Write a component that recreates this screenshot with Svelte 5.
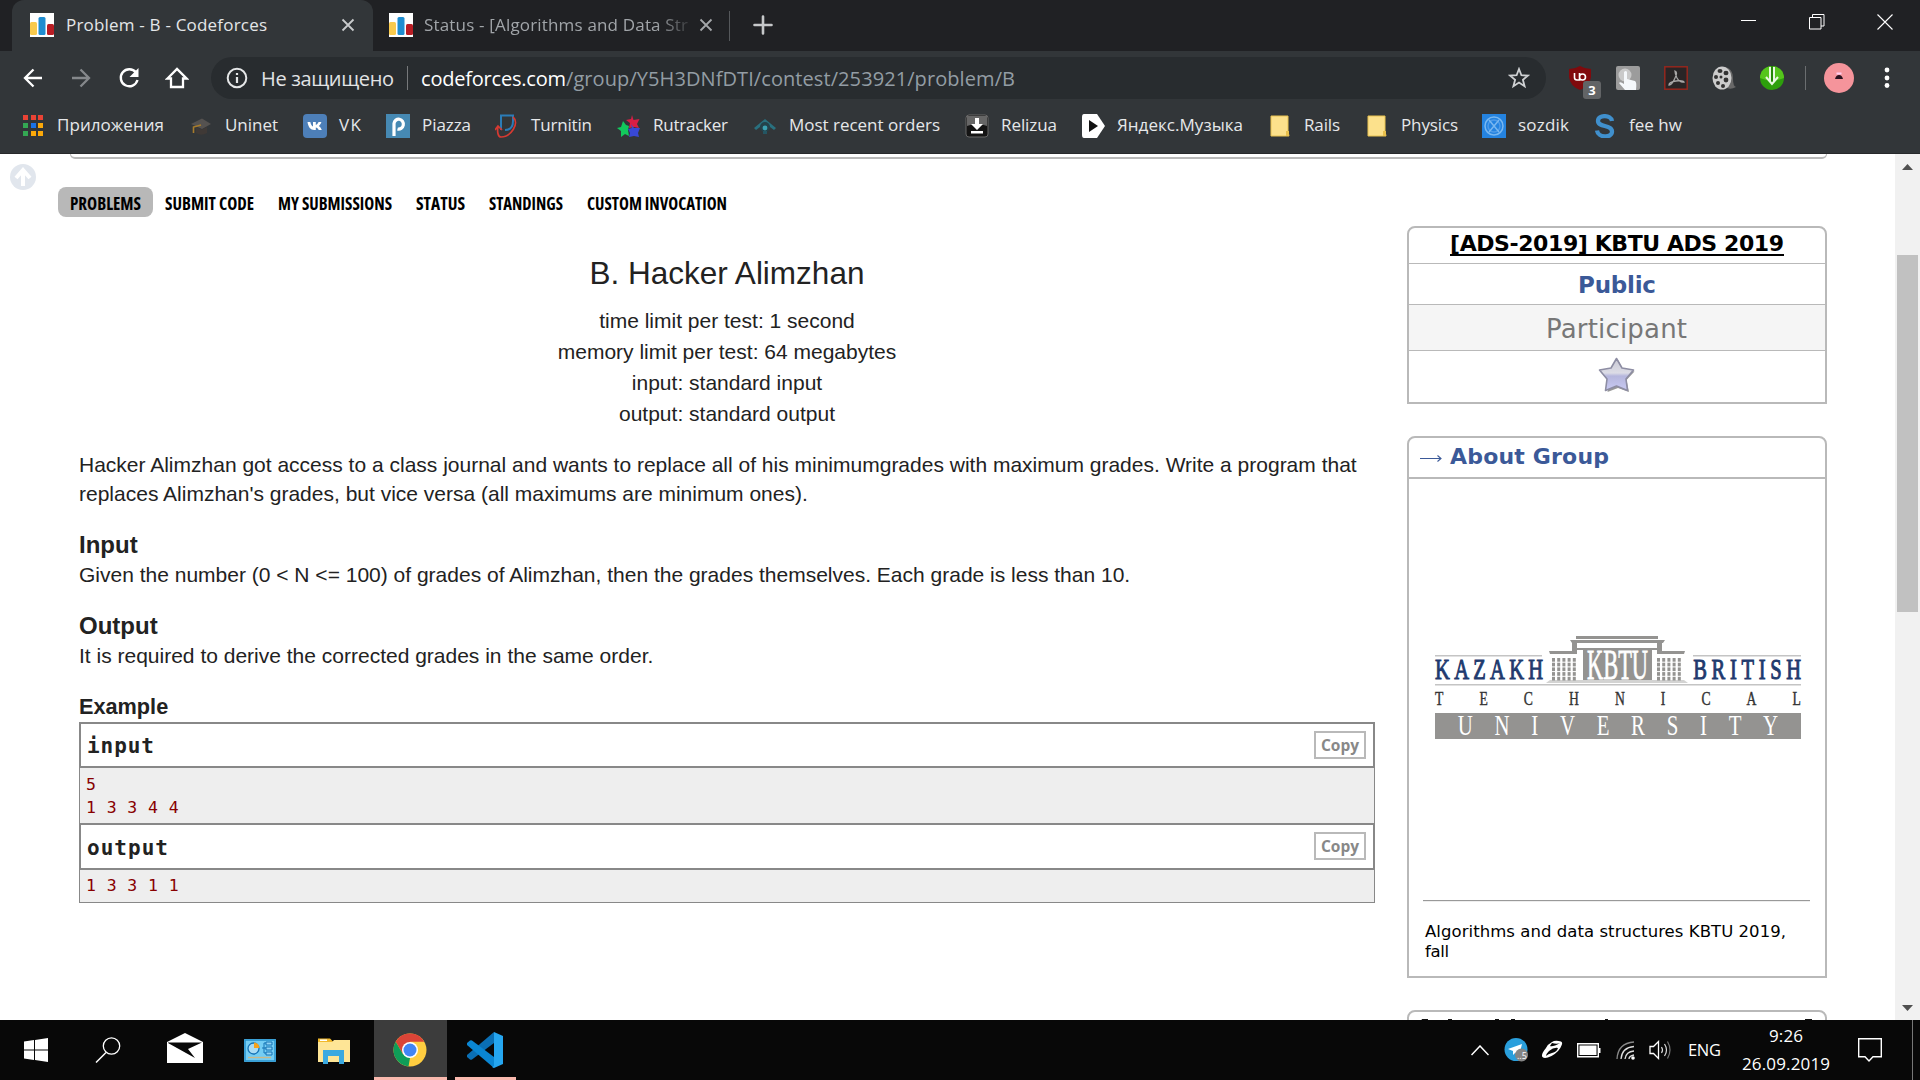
<script>
  const bookmarks = [
    { icon: 'apps', label: 'Приложения', slot: 168, text: 107 },
    { icon: 'uninet', label: 'Uninet', slot: 114, text: 53 },
    { icon: 'vk', label: 'VK', slot: 83, text: 22 },
    { icon: 'piazza', label: 'Piazza', slot: 109, text: 49 },
    { icon: 'turnitin', label: 'Turnitin', slot: 122, text: 61 },
    { icon: 'rutracker', label: 'Rutracker', slot: 136, text: 75 },
    { icon: 'orders', label: 'Most recent orders', slot: 212, text: 151 },
    { icon: 'relizua', label: 'Relizua', slot: 116, text: 56 },
    { icon: 'music', label: 'Яндекс.Музыка', slot: 187, text: 126 },
    { icon: 'folder', label: 'Rails', slot: 97, text: 36 },
    { icon: 'folder', label: 'Physics', slot: 117, text: 57 },
    { icon: 'sozdik', label: 'sozdik', slot: 111, text: 51 },
    { icon: 'fee', label: 'fee hw', slot: 100, text: 53 },
  ];
  const menu = [
    ['PROBLEMS', 71],
    ['SUBMIT CODE', 89],
    ['MY SUBMISSIONS', 114],
    ['STATUS', 49],
    ['STANDINGS', 74],
    ['CUSTOM INVOCATION', 140],
  ];
  const limits = [
    'time limit per test: 1 second',
    'memory limit per test: 64 megabytes',
    'input: standard input',
    'output: standard output',
  ];
  const columns = [0, 1, 2, 3, 4];
  const floors = [0, 1, 2, 3, 4];
</script>

{#snippet fit(text, width, size, squeeze = 'spacing')}
  <svg class="fit" {width} height={Math.round(size * 1.4)}>
    <text x="0" y={Math.round(size * 1.05)} font-size={size} textLength={width} lengthAdjust={squeeze}>{text}</text>
  </svg>
{/snippet}

{#snippet favicon()}
  <svg width="24" height="24" viewBox="0 0 24 24">
    <rect width="24" height="24" fill="#fff" />
    <rect x="0" y="9" width="7" height="13" rx="1.5" fill="#f9ca4d" />
    <rect x="8.500" y="4" width="7" height="18" rx="1.500" fill="#1f8dd0" />
    <rect x="17" y="11" width="7" height="11" rx="1.500" fill="#b81d24" />
  </svg>
{/snippet}

{#snippet bookmarkIcon(name)}
  <svg width="24" height="24" viewBox="0 0 24 24">
    {#if name === 'apps'}
      <g>
        <path fill="#ea4335" d="M2 1h5v5H2zM10 1h5v5h-5zM17 1h5v5h-5z" />
        <path fill="#34a853" d="M2 9h5v5H2zM2 17h5v5H2z" />
        <path fill="#1a73e8" d="M10 9h5v5h-5z" />
        <path fill="#fba90a" d="M17 9h5v5h-5zM10 17h5v5h-5zM17 17h5v5h-5z" />
      </g>
    {:else if name === 'uninet'}
      <path d="M2 10 13 4.500l9 5.500-9 5z" fill="#555250" /><path d="M7 13v6q5 3.500 11 0v-6l-5 2.500z" fill="#3f3936" />
      <path d="M12 11 4.500 13v6" fill="none" stroke="#a87c2b" stroke-width="1.600" />
    {:else if name === 'vk'}
      <rect width="24" height="24" rx="4" fill="#4d7fb8" />
      <path d="M4.500 8h2.800c.6 2.500 1.500 4 2.700 4.500V8h2.800v3c1.200-.3 2-1.500 2.800-3h2.800c-.5 1.700-1.500 3-2.600 4 1.300.8 2.300 2 3 4h-3c-.7-1.400-1.700-2.400-3-2.600V16h-1.500C7.500 16 5.200 13 4.500 8z" fill="#fff" />
    {:else if name === 'piazza'}
      <rect width="24" height="24" fill="#4689b3" />
      <path d="M8 22V9.500a4.700 5 0 1 1 3.500 5.500" fill="none" stroke="#fff" stroke-width="3.200" />
    {:else if name === 'turnitin'}
      <path d="M6 16V1.500h12V7c0 6-3 9-8 9" fill="none" stroke="#2b7cb8" stroke-width="2" />
      <path d="M18 3c7 6-2 20-12 20-3 0-4-5-3-11M0 16l3-4 4 4" fill="none" stroke="#d63a32" stroke-width="1.700" />
    {:else if name === 'rutracker'}
      <path d="m15 1 1.500 5 6-1-2.500 5 2 4-5-1-5 1 1-5-4-3 5-1z" fill="#d91e45" />
      <path d="m6 7 3 4 3 1-1 4 1 6-4-2-4 3 0-6-4-3 4-1z" fill="#12c95c" />
      <path d="m14 10 3 4 6 0-2 5 1 4-5-1-5 1 1-4-2-4 4-1z" fill="#3848d5" />
    {:else if name === 'orders'}
      <path d="M1 14 12 5l11 9-2 2-4-3a6 6 0 0 0-10 0l-4 3z" fill="#29707f" /><circle cx="12" cy="13" r="5" fill="#24424b" /><circle cx="12" cy="14" r="2.400" fill="#3ba1b3" /><path d="M10 17h4v3h-4z" fill="#245663" />
    {:else if name === 'relizua'}
      <rect x="1" y="1" width="22" height="22" rx="3" fill="#141414" stroke="#666" />
      <path d="M2 2h20v10q-10-4-20 0z" fill="#666" />
      <path d="M10 4h4v6h4l-6 6-6-6h4zM6 17h12v2.500H6z" fill="#fff" />
    {:else if name === 'music'}
      <path d="M3 0h13l8 12-8 12H3q-2 0-2-3V3q0-3 2-3z" fill="#fff" /><path d="m8 6 9 6-9 6z" fill="#111" />
    {:else if name === 'folder'}
      <path d="M3 2h17v15l1 5H3z" fill="#fce18c" stroke="#e8c250" /><path d="M18 22v-5h3v5z" fill="#e9c04c" />
    {:else if name === 'sozdik'}
      <rect width="24" height="24" fill="#2483e0" /><g fill="none" stroke="#78b7f0" stroke-width="1.500"><circle cx="12" cy="12" r="9" /><circle cx="12" cy="12" r="6" stroke="#4f9be8" /><path d="m7 6 10 12M17 6 7 18" /></g>
    {:else}
      <path d="M19 7C18 .5 5 .5 5 7s14 3.500 14 10.500-14 6.500-15-1" fill="none" stroke="#4090cd" stroke-width="4.300" />
    {/if}
  </svg>
{/snippet}

<div class="screen">
  <div class="tabs">
    <div class="tab active">
      {@render favicon()}
      <div class="tab-title">{@render fit('Problem - B - Codeforces', 201, 17)}</div>
      <svg width="14" height="14" viewBox="0 0 14 14"><path d="m1.500 1.500 11 11m0-11-11 11" stroke="#c8cacc" stroke-width="1.800" /></svg>
    </div>
    <div class="tab idle">
      {@render favicon()}
      <div class="tab-title fade">{@render fit('Status - [Algorithms and Data Str', 264, 17)}</div>
      <svg width="14" height="14" viewBox="0 0 14 14"><path d="m1.500 1.500 11 11m0-11-11 11" stroke="#a4a7aa" stroke-width="1.800" /></svg>
    </div>
    <span class="tab-sep"></span>
    <svg class="plus" width="20" height="20" viewBox="0 0 20 20"><path d="M10 1.500v17M1.500 10h17" stroke="#c6c8ca" stroke-width="2.600" stroke-linecap="round" /></svg>
    <div class="window-controls">
      <svg width="16" height="16" viewBox="0 0 16 16"><path d="M0 6.500h15" stroke="#fff" /></svg>
      <svg width="16" height="16" viewBox="0 0 16 16"><path d="M.5 3.500h11.500v11.500H.5zM3.500 3.500V.5H15V12h-3" fill="none" stroke="#fff" /></svg>
      <svg width="16" height="16" viewBox="0 0 16 16"><path d="m.5.5 15 15m0-15-15 15" stroke="#fff" stroke-width="1.100" /></svg>
    </div>
  </div>

  <div class="toolbar">
    <div class="nav">
      <svg width="24" height="24" viewBox="0 0 24 24"><path d="M21 12H4m8.500-8.500L4 12l8.500 8.500" fill="none" stroke="#fff" stroke-width="2.300" /></svg>
      <svg width="24" height="24" viewBox="0 0 24 24"><path d="M3 12h17M11.500 3.500 20 12l-8.500 8.500" fill="none" stroke="#85888b" stroke-width="2.300" /></svg>
      <svg width="24" height="24" viewBox="0 0 24 24"><path d="M19 6.500A8.500 8.500 0 1 0 20.500 14" fill="none" stroke="#fff" stroke-width="2.400" /><path d="M21.500 2v9h-9z" fill="#fff" /></svg>
      <svg width="24" height="24" viewBox="0 0 24 24"><path d="M2.500 12.500 12 3l9.500 9.500H18V21H6v-8.500z" fill="none" stroke="#fff" stroke-width="2.300" /></svg>
    </div>
    <div class="omnibox">
      <svg width="22" height="22" viewBox="0 0 22 22"><circle cx="11" cy="11" r="9.300" fill="none" stroke="#e5e7e8" stroke-width="2" /><path d="M11 10v6M11 6v2" stroke="#e5e7e8" stroke-width="2.200" /></svg>
      <span class="secure">{@render fit('Не защищено', 133, 20)}</span>
      <span class="omni-sep"></span>
      <span class="host">{@render fit('codeforces.com', 145, 20)}</span><span class="path">{@render fit('/group/Y5H3DNfDTI/contest/253921/problem/B', 449, 20)}</span>
      <svg class="star" width="22" height="22" viewBox="0 0 22 22"><path d="m11 2 2.400 6.200 6.600.4-5.100 4.200 1.700 6.400L11 15.600l-5.600 3.600 1.700-6.400L2 8.600l6.600-.4z" fill="none" stroke="#cfd1d3" stroke-width="1.800" /></svg>
    </div>
    <div class="extensions">
      <div class="ublock">
        <svg width="24" height="24" viewBox="0 0 24 24"><path d="M12 0q5 3 11 3v8q-1 9-11 13Q2 20 1 11V3q6 0 11-3z" fill="#800a0d" /><path d="M6.500 7v4.500q0 2.500 2.500 2.500h2.500V7M11.500 11a3 3 0 1 0 6 0 3 3 0 0 0-6 0" fill="none" stroke="#fff" stroke-width="1.600" /></svg>
        <span class="badge">3</span>
      </div>
      <svg width="24" height="24" viewBox="0 0 24 24"><rect width="24" height="24" rx="2" fill="#9c9c9c" /><circle cx="9" cy="9" r="6.500" fill="#cacaca" /><path d="M8 6q2-2 3 0v7l8 2q2 1 1 9H9l-6-7q1-2 5 1z" fill="#f5f8fb" /></svg>
      <svg width="24" height="24" viewBox="0 0 24 24"><rect x=".8" y=".8" width="22.400" height="22.400" fill="#292526" stroke="#94271e" stroke-width="1.500" /><path d="M11 5q3 1 0 7-3 7-6 7 0-3 7-4 7-1 8 1-4 1-7-4-2-4-2-7z" fill="none" stroke="#a8a6a6" stroke-width="1.300" /></svg>
      <svg width="24" height="24" viewBox="0 0 24 24"><path d="M11 1q10 0 10 12 0 7 3 8-5 3-9 1z" fill="#686868" /><ellipse cx="10" cy="12" rx="9.500" ry="11.500" fill="#ccc" /><g fill="#333"><ellipse cx="8" cy="5" rx="2.500" ry="2" /><ellipse cx="14" cy="7" rx="2.500" ry="2.200" /><circle cx="4" cy="11" r="2" /><circle cx="14" cy="14" r="2.400" /><circle cx="6" cy="17" r="2" /><circle cx="11" cy="20" r="2" /><circle cx="9" cy="11" r="1.500" /></g></svg>
      <svg width="24" height="24" viewBox="0 0 24 24"><circle cx="12" cy="12" r="12" fill="#2d9f0c" /><path d="M0 12a12 12 0 0 1 24 0q-12 5-24 0z" fill="#55c51c" /><path d="M10 1v14M14 1v14M6 11l6 7 6-7" fill="none" stroke="#e9f8e2" stroke-width="2" /><path d="M12 0v15" stroke="#258707" stroke-width="2" /></svg>
      <span class="ext-sep"></span>
      <svg class="avatar" width="30" height="30" viewBox="0 0 30 30"><circle cx="15" cy="15" r="15" fill="#f5949b" /><path d="M11 16q1-4 4-4t4 4z" fill="#2a1320" /><path d="M12.500 9.500h5v2h-5z" fill="#fce" /></svg>
      <svg width="6" height="24" viewBox="0 0 6 24"><g fill="#fff"><circle cx="3" cy="4" r="2.400" /><circle cx="3" cy="12" r="2.400" /><circle cx="3" cy="19.500" r="2.400" /></g></svg>
    </div>
  </div>

  <div class="bookmarks">
    {#each bookmarks as b}
      <div class="bookmark" style:width="{b.slot}px">
        {@render bookmarkIcon(b.icon)}
        <span class="bookmark-label">{@render fit(b.label, b.text, 17)}</span>
      </div>
    {/each}
  </div>

  <div class="page">
    <div class="gutter">
      <svg width="26" height="26" viewBox="0 0 26 26"><circle cx="13" cy="13" r="13" fill="#e1e6ed" /><path d="M13 22V7M6 14l7-8 7 8" fill="none" stroke="#fff" stroke-width="4" /></svg>
    </div>
    <div class="site">
      <div class="box-end"></div>
      <div class="columns">
        <main>
          <nav class="menu">
            {#each menu as [label, width], i}
              <span class="menu-item" class:current={i === 0}>{@render fit(label, width, 18, 'spacingAndGlyphs')}</span>
            {/each}
          </nav>
          <article>
            <h1>B. Hacker Alimzhan</h1>
            {#each limits as line}<div class="limit">{line}</div>{/each}
            <p class="statement">Hacker Alimzhan got access to a class journal and wants to replace all of his minimumgrades with maximum grades. Write a program that replaces Alimzhan's grades, but vice versa (all maximums are minimum ones).</p>
            <h2>Input</h2>
            <p>Given the number (0 &lt; N &lt;= 100) of grades of Alimzhan, then the grades themselves. Each grade is less than 10.</p>
            <h2 class="output-title">Output</h2>
            <p>It is required to derive the corrected grades in the same order.</p>
            <h3>Example</h3>
            <div class="sample">
              <div class="sample-head"><span class="sample-title">{@render fit('input', 67, 21)}</span><span class="copy">Copy</span></div>
              <pre class="two">5
1 3 3 4 4</pre>
              <div class="sample-head second"><span class="sample-title">{@render fit('output', 81, 21)}</span><span class="copy">Copy</span></div>
              <pre class="one">1 3 3 1 1</pre>
            </div>
          </article>
        </main>
        <aside>
          <section class="card">
            <div class="row group"><span class="group-link">{@render fit('[ADS-2019] KBTU ADS 2019', 334, 22)}</span></div>
            <div class="row public">{@render fit('Public', 78, 23)}</div>
            <div class="row participant">{@render fit('Participant', 141, 26)}</div>
            <div class="row rate">
              <svg width="38" height="38" viewBox="0 0 38 38">
                <defs><linearGradient id="silver" x1="0" y1="0" x2="0" y2="1"><stop offset="0" stop-color="#c9c9d4" /><stop offset=".45" stop-color="#dcdce6" /><stop offset=".55" stop-color="#b5b6dd" /><stop offset="1" stop-color="#c9caf2" /></linearGradient></defs>
                <path d="m20 4 5 9.500 11.500 2-8 8.500 2.500 12-11-4-10.500 4 2.500-12-8-8.500 11-2z" fill="#444" opacity=".55" />
                <path d="m18.500 2.500 5.500 9.500 11.500 2-7.500 9 1.500 11.500-11-4.500-11 4.500L9 23 1.500 14 13 12z" fill="url(#silver)" stroke="#8d8da3" stroke-width="1.600" stroke-linejoin="round" />
              </svg>
            </div>
          </section>
          <section class="card about">
            <div class="caption">
              <svg width="22" height="12" viewBox="0 0 22 12"><path d="M0 7.500h21M17.500 4.500l3.500 3-3.500 3" fill="none" stroke="#3b5998" stroke-width="1.100" /></svg>
              {@render fit('About Group', 159, 22)}
            </div>
            <div class="about-body">
              <svg class="logo" width="368" height="106" viewBox="0 0 368 106">
                <g fill="#949391">
                  <path d="M142 0h82v3h-82zM136 4h95l-2 3h-91zM138 7h5v11h-5zM223 7h5v11h-5zM115 15h23v3h-22zM228 15h23l-1 3h-22z" />
                  <path d="M138 12h90v2h-90zM149 14h69v30h-69z" />
                  <path d="M116 44h134l4 3H112z" fill="#d3d3d2" />
                  {#each columns as c}
                    {#each floors as f}
                      <rect x={118 + c * 5.2} y={22 + f * 4.700} width="3" height="3.700" />
                      <rect x={223 + c * 5.2} y={22 + f * 4.700} width="3" height="3.700" />
                    {/each}
                  {/each}
                  <path d="M1 19h107v1.500H1zM259 19h108v1.500H259zM1 48h366v1.500H1z" fill="#c4c4c4" />
                  <path d="M1 77h366v26H1z" />
                </g>
                <g class="serif">
                  <text x="153" y="43" font-size="42" fill="#fff" stroke="#fff" stroke-width=".8" textLength="61" lengthAdjust="spacingAndGlyphs">KBTU</text>
                  <g transform="scale(.72 1)">
                    <text x="1.500" y="43" font-size="28.500" fill="#1f3a6e" stroke="#1f3a6e" stroke-width="1" textLength="150">KAZAKH</text>
                    <text x="360" y="43" font-size="28.500" fill="#1f3a6e" stroke="#1f3a6e" stroke-width="1" textLength="150">BRITISH</text>
                    <text x="1.500" y="69" font-size="19" fill="#333" stroke="#333" stroke-width=".4" textLength="508">TECHNICAL</text>
                    <text x="33" y="99.500" font-size="29" fill="#fff" textLength="445">UNIVERSITY</text>
                  </g>
                </g>
              </svg>
              <hr />
              <p class="about-text">{@render fit('Algorithms and data structures KBTU 2019,', 361, 16.5)}{@render fit('fall', 24, 16.5)}</p>
            </div>
          </section>
          <section class="card next">
            <svg width="410" height="6" viewBox="0 0 410 6"><path d="M13 4h6v2h-7zM39 4h4v2h-4zM86 4h4v2h-4zM102 4h4v2h-4zM196 4h3v2h-3zM396 4h7v2h-7z" fill="#111" /></svg>
          </section>
        </aside>
      </div>
    </div>
    <div class="scrollbar">
      <svg width="11" height="6" viewBox="0 0 11 6"><path d="M0 6 5.500 0 11 6z" fill="#505050" /></svg>
      <div class="thumb"></div>
      <svg class="down" width="11" height="6" viewBox="0 0 11 6"><path d="M0 0h11L5.500 6z" fill="#505050" /></svg>
    </div>
  </div>

  <footer class="taskbar">
    <div class="cell w72"><svg width="24" height="24" viewBox="0 0 24 24"><path d="M0 3.500 10 2v9.500H0zM11 1.900 24 0v11.500H11zM0 12.500h10V22L0 20.500zM11 12.500h13V24l-13-1.900z" fill="#fff" /></svg></div>
    <div class="cell w72"><svg width="26" height="26" viewBox="0 0 26 26"><circle cx="16.500" cy="9" r="8.200" fill="none" stroke="#fff" stroke-width="1.300" /><path d="M11 15.500 1 25.500" stroke="#fff" stroke-width="1.500" /></svg></div>
    <div class="cell w82"><svg class="lift" width="36" height="30" viewBox="0 0 36 30"><path d="M0 9 18 0l18 9v21H0z" fill="#fff" /><path d="M1 9.500h34L21 16l7 9L1 10z" fill="#080808" /></svg></div>
    <div class="cell w68"><svg width="32" height="23" viewBox="0 0 32 23"><rect width="32" height="23" rx="1" fill="#74cdf4" /><rect x="1" y="1" width="30" height="21" fill="none" stroke="#2791cc" stroke-width="1.500" /><circle cx="9.500" cy="9.500" r="5.500" fill="#a9dcf5" stroke="#1572b5" stroke-width="1.300" /><path d="M10 9V3.500a5.500 5.500 0 0 1 5.500 5.500z" fill="#f7a21b" /><path d="M18 9h2V4h2m-2 5h2m-2 0v5h2" stroke="#1572b5" fill="none" /><path d="M22 3h6v3h-6zM22 8h6v3h-6zM22 13h6v3h-6z" fill="#8fd3f5" stroke="#1572b5" /><path d="M4 18.500h23" stroke="#c9b98a" stroke-width="1.400" /></svg></div>
    <div class="cell w80"><svg width="32" height="27" viewBox="0 0 32 27"><path d="M0 1.500h12l3 3v3H0z" fill="#f2b92c" /><path d="M2 2.500h7v1.500H2z" fill="#fff" /><path d="M0 5h14l2-2h16v22H0z" fill="#fee596" /><path d="M5 27V13h21v14h-5v-8h-11v8z" fill="#3ba9e0" /></svg></div>
    <div class="cell chrome"><svg width="34" height="34" viewBox="0 0 34 34"><circle cx="17" cy="17" r="16.500" fill="#ffcd40" /><path d="M2.700 8.750A16.500 16.500 0 0 1 31.300 8.750H17L9.900 21.100z" fill="#db4437" /><path d="M2.700 8.750 9.900 21.100 17 25l-1.500 8.450A16.500 16.500 0 0 1 2.700 8.750z" fill="#0f9d58" /><circle cx="17" cy="17" r="8" fill="#fff" /><circle cx="17" cy="17" r="6.500" fill="#4285f4" /></svg></div>
    <div class="cell code"><svg width="36" height="36" viewBox="0 0 36 36"><path d="M0 23q-1 1 0 2l3 2.500q1 .5 2 0L27 11V0z" fill="#0a6fb5" /><path d="M0 13q-1-1 0-2l3-2.500q1-.5 2 0L27 25v11z" fill="#0a86d3" /><path d="m27 0 9 4v28l-9 4-2-1 2-1z" fill="#25a6f0" /></svg></div>
    <div class="tray">
      <svg class="chevron" width="18" height="11" viewBox="0 0 18 11"><path d="m.5 10 8.500-9 8.500 9" fill="none" stroke="#fff" stroke-width="1.500" /></svg>
      <svg class="telegram" width="25" height="26" viewBox="0 0 25 26"><circle cx="12" cy="12.500" r="11.500" fill="#2a9fdc" /><path d="m4 12 14-5-3 12-4-3-2 2v-4z" fill="#fff" /><circle cx="17.500" cy="18" r="6.500" fill="#858585" /><text x="13" y="21.500" font-size="9" fill="#fff">..5</text></svg>
      <svg class="pen" width="22" height="20" viewBox="0 0 22 20"><path d="M11 2q3-2 9-.5 2 1 .5 4-2 6-10 10.500-7 3.500-9 1T5 8q2-4 6-6z" fill="#fff" /><path d="M11 3q5 1.500 8 0-7 4-10 3z" fill="#080808" /><path d="M8 11q5-4 9-3-1 4-6 5-4 1-6 3 0-2 3-5z" fill="#080808" /></svg>
      <svg class="battery" width="24" height="15" viewBox="0 0 24 15"><path d="M.7.700h20.600v13H.7z" fill="none" stroke="#fff" stroke-width="1.400" /><path d="M2.500 2.500h17v9.400h-17zM22 5h1.500v5H22z" fill="#fff" /></svg>
      <svg class="wifi" width="20" height="19" viewBox="0 0 20 19"><g fill="none" stroke="#ddd" stroke-width="1.300"><path d="M1 18Q2 2 18 1" stroke="#888" /><path d="M5 18Q6 6.500 18 5.500M9 18q1-7.500 9-8M13 18q0-3 5-4" /></g><circle cx="17" cy="17" r="1.800" fill="#fff" /></svg>
      <svg class="volume" width="23" height="20" viewBox="0 0 23 20"><path d="M1 6.500h3.500l5-5v17l-5-5H1z" fill="none" stroke="#fff" stroke-width="1.300" /><path d="M12.500 7q2 3 0 6m3-9q4 6 0 12" fill="none" stroke="#ddd" stroke-width="1.200" /><path d="M18.500 1.500q5 8.500 0 17" fill="none" stroke="#777" stroke-width="1.200" /></svg>
      <div class="lang">{@render fit('ENG', 33, 16.5)}</div>
      <div class="clock">{@render fit('9:26', 34, 17)}{@render fit('26.09.2019', 88, 17)}</div>
      <svg class="notice" width="24" height="25" viewBox="0 0 24 25"><path d="M.7.700h22.600v18h-8.300l-4 4.300-4-4.300H.7z" fill="none" stroke="#fff" stroke-width="1.400" /></svg>
      <span class="desktop"></span>
    </div>
  </footer>
</div>

<style>
  :global(body) { overflow: hidden; }
  .screen { width: 1920px; height: 1080px; display: flex; flex-direction: column; background: #fff; font-family: "Open Sans", "Noto Sans", sans-serif; overflow: hidden; }
  svg { display: block; flex: none; }
  .fit { overflow: visible; }
  .fit text { fill: currentColor; white-space: pre; }

  .tabs { height: 51px; flex: none; background: #202124; display: flex; align-items: center; }
  .tab { height: 51px; display: flex; align-items: center; box-sizing: border-box; color: #e4e6e8; padding-bottom: 1px; }
  .active { width: 361px; margin-left: 12px; padding-left: 18px; background: #323639; border-radius: 12px 12px 0 0; }
  .tab-title { margin-left: 12px; width: 275px; flex: none; }
  .idle { padding-left: 16px; color: #a1a5a9; }
  .idle .tab-title { margin-left: 11px; width: 275px; }
  .fade { -webkit-mask-image: linear-gradient(90deg, #000 232px, transparent 272px); mask-image: linear-gradient(90deg, #000 232px, transparent 272px); }
  .tab-sep { width: 1px; height: 30px; background: #55585b; margin-left: 16px; }
  .plus { margin: 0 0 1px 23px; }
  .window-controls { margin-left: auto; margin-right: 27px; display: flex; gap: 52px; padding-bottom: 8px; }

  .toolbar { height: 54px; flex: none; background: #323639; display: flex; align-items: center; }
  .nav { display: flex; gap: 24px; padding-left: 21px; width: 190px; }
  .omnibox { width: 1335px; height: 42px; border-radius: 21px; background: #282c2f; display: flex; align-items: center; box-sizing: border-box; padding: 0 16px 0 15px; }
  .secure { color: #e1e3e5; margin-left: 13px; padding-top: 2px; }
  .omni-sep { width: 1px; height: 24px; background: #77797b; margin: 0 13px; }
  .host { color: #fff; padding-top: 2px; }
  .path { color: #939da4; padding-top: 2px; }
  .star { margin-left: auto; }
  .extensions { display: flex; align-items: center; gap: 24px; padding-left: 22px; }
  .ublock { position: relative; }
  .badge { position: absolute; left: 15px; top: 15px; width: 18px; height: 18px; border-radius: 3px; background: #626466; color: #fff; font: bold 13px/18px "Open Sans", sans-serif; text-align: center; }
  .ext-sep { width: 1px; height: 24px; background: #6b6e70; margin: 0 -6px 0 -3px; }
  .avatar { margin-right: 6px; }

  .bookmarks { height: 49px; flex: none; background: #323639; border-bottom: 1px solid #27292b; box-sizing: border-box; padding: 0 0 7px 21px; display: flex; align-items: center; color: #e6e8ea; }
  .bookmark { display: flex; align-items: center; gap: 12px; flex: none; }
  .bookmark-label { padding-bottom: 2px; }

  .page { flex: 1; min-height: 0; display: flex; background: #fff; overflow: hidden; }
  .gutter { width: 58px; flex: none; box-sizing: border-box; padding: 10px 0 0 10px; }
  .site { width: 1837px; flex: none; }
  .box-end { width: 1757px; height: 5px; margin-left: 12px; box-sizing: border-box; border: 2px solid #b9b9b9; border-top: 0; border-left-width: 1px; border-right-width: 1px; border-radius: 0 0 6px 6px; }
  .columns { display: flex; }
  main { width: 1349px; flex: none; padding-top: 28px; }
  .menu { display: flex; height: 30px; }
  .menu-item { height: 30px; padding: 0 12px; display: flex; align-items: center; box-sizing: border-box; font-weight: bold; font-stretch: 75%; color: #000; padding-top: 3px; }
  .current { background: #b8b8b8; border-radius: 8px; }
  article { margin-left: 21px; width: 1296px; padding-top: 34px; font: 21px/29.4px "Liberation Sans", Arial, sans-serif; color: #222; }
  h1 { margin: 0 0 11px; font-size: 31.5px; line-height: 44px; font-weight: normal; text-align: center; }
  .limit { height: 31px; line-height: 29px; text-align: center; }
  p { margin: 0; }
  .statement { padding-top: 20px; }
  h2 { font-size: 24px; line-height: 30px; margin: 21px 0 0; }
  .output-title { margin-top: 22px; }
  h3 { font-size: 21.700px; line-height: 30px; margin: 21px 0 0; }
  .sample { font-family: "DejaVu Sans Mono", monospace; }
  .sample-head { height: 46px; box-sizing: border-box; border: 2px solid #888; display: flex; align-items: center; justify-content: space-between; padding: 0 7px 0 6px; font-weight: bold; }
  .sample-head.second { height: 47px; }
  .sample-title { padding-top: 2px; }
  .copy { border: 2px solid #b9b9b9; width: 52px; height: 28px; box-sizing: border-box; color: #888; font: bold 15.500px/24px "Open Sans", sans-serif; text-align: center; }
  pre { margin: 0; background: #eee; border: 1px solid #888; border-width: 0 1px; box-sizing: border-box; padding: 5px 0 0 6px; font: 16.500px/23px "DejaVu Sans Mono", monospace; letter-spacing: .4px; color: #880000; }
  .two { height: 55px; }
  .one { height: 33px; padding-top: 4px; border-bottom-width: 1px; }

  aside { width: 420px; flex: none; padding-top: 67px; font-family: "DejaVu Sans", Verdana, sans-serif; }
  .card { border: 2px solid #b9b9b9; border-radius: 8px 8px 0 0; box-sizing: border-box; margin-bottom: 32px; }
  .row { display: flex; align-items: center; justify-content: center; border-bottom: 1px solid #b9b9b9; box-sizing: border-box; }
  .group { height: 36px; font-weight: bold; color: #000; align-items: flex-start; }
  .group-link { height: 28px; border-bottom: 2px solid #000; box-sizing: border-box; }
  .public { height: 41px; font-weight: bold; color: #3b5998; padding-top: 1px; }
  .participant { height: 46px; background: #f5f5f5; color: #777; padding: 2px 2px 0 0; }
  .rate { height: 51px; border-bottom: 0; padding: 0 1px 3px 0; }
  .caption { height: 41px; box-sizing: border-box; border-bottom: 2px solid #b9b9b9; display: flex; align-items: center; gap: 8px; padding: 0 0 2px 11px; color: #3b5998; font-weight: bold; }
  .about { height: 542px; }
  .about-body { padding: 157px 15px 0 14px; }
  .logo { margin-left: 11px; }
  .serif { font-family: "Liberation Serif", "Times New Roman", serif; }
  hr { margin: 158px 0 0; border: 0; border-top: 1px solid #999; border-bottom: 1px solid #eee; }
  .about-text { padding: 18px 0 0 2px; display: flex; flex-direction: column; color: #000; }
  .about-text .fit { height: 20px; }
  .next { height: 60px; padding-top: 3px; }

  .scrollbar { width: 25px; background: #f1f1f1; display: flex; flex-direction: column; align-items: center; padding-top: 10px; box-sizing: border-box; }
  .thumb { width: 21px; height: 357px; background: #c1c1c1; margin-top: 85px; }
  .down { margin-top: auto; margin-bottom: 9px; }

  .taskbar { height: 60px; flex: none; background: #080808; display: flex; color: #fff; }
  .cell { display: flex; align-items: center; justify-content: center; box-sizing: border-box; height: 60px; }
  .w72 { width: 72px; }
  .w82 { width: 82px; }
  .w68 { width: 68px; }
  .w80 { width: 80px; }
  .lift { margin-bottom: 4px; }
  .chrome { width: 73px; background: #3c3c3c; border-bottom: 3px solid #f9b9ae; padding: 2px 1px 0 0; }
  .code { width: 61px; margin-left: 8px; border-bottom: 3px solid #f9b9ae; padding: 3px 1px 0 0; }
  .tray { margin-left: auto; display: flex; align-items: center; }
  .telegram { margin-left: 15px; }
  .pen { margin-left: 12px; }
  .battery { margin-left: 14px; }
  .wifi { margin-left: 15px; }
  .volume { margin-left: 13px; }
  .lang { margin-left: 16px; }
  .clock { margin-left: 21px; width: 88px; display: flex; flex-direction: column; align-items: center; gap: 4px; }
  .notice { margin-left: 28px; }
  .desktop { width: 1px; height: 60px; background: #777; margin: 0 7px 0 30px; }
</style>
